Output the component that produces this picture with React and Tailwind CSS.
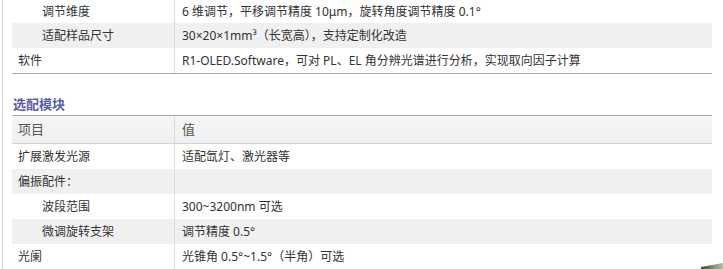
import React from "react";

const font = { fontFamily: '"Noto Sans", "Noto Sans CJK SC", sans-serif' };

function Row({ label, value, gray, indent, h = "h-[25px]" }) {
  return (
    <div className={`flex ${h} ${gray ? "bg-[#f0f0f0]" : "bg-white"}`}>
      <div className={`w-[163px] shrink-0 border-r border-[#dcdcdc] flex items-center ${indent ? "pl-[30px]" : "pl-[6px]"}`}>
        {label}
      </div>
      <div className="flex-1 flex items-center pl-[7px]">{value}</div>
    </div>
  );
}

export default function App() {
  return (
    <div className="relative w-[723px] h-[269px] overflow-hidden bg-white text-[12px] text-[#333] leading-none" style={font}>
      <div className="flex h-full">
        <div className="w-[2px] shrink-0" />
        <div className="w-px shrink-0 bg-[#d4d4d4]" />
        <div className="w-[9px] shrink-0" />
        <div className="w-[700px] shrink-0 flex flex-col">
          <div className="border-b border-[#a9a9a9]">
            <Row indent h="h-[23px]" label="调节维度" value="6 维调节，平移调节精度 10μm，旋转角度调节精度 0.1°" />
            <Row indent gray label="适配样品尺寸" value="30×20×1mm³（长宽高），支持定制化改造" />
            <Row label="软件" value="R1-OLED.Software，可对 PL、EL 角分辨光谱进行分析，实现取向因子计算" />
          </div>
          <div className="h-[41px] flex items-end pb-[4px] pl-[1px]">
            <span className="text-[13px] font-bold text-[#5a5ca8]">选配模块</span>
          </div>
          <div className="flex h-[29px] border-t border-[#a9a9a9] border-b border-b-[#cfd3da] bg-gradient-to-b from-[#f6f6f6] to-[#eeeff0] text-[#555] text-[13px]">
            <div className="w-[163px] shrink-0 border-r border-[#dcdcdc] flex items-center pl-[6px]">项目</div>
            <div className="flex-1 flex items-center pl-[7px]">值</div>
          </div>
          <Row label="扩展激发光源" value="适配氙灯、激光器等" />
          <Row gray label="偏振配件：" value="" />
          <Row indent label="波段范围" value="300~3200nm 可选" />
          <Row indent gray label="微调旋转支架" value="调节精度 0.5°" />
          <Row label="光阑" value="光锥角 0.5°~1.5°（半角）可选" />
        </div>
      </div>
      <svg className="absolute right-0 bottom-0" width="22" height="6" viewBox="0 0 22 6">
        <defs>
          <linearGradient id="g" x1="0" y1="0" x2="1" y2="0">
            <stop offset="0" stopColor="#3a4a30" />
            <stop offset="1" stopColor="#b8c0a8" />
          </linearGradient>
        </defs>
        <polygon points="0,4 22,0 22,6 0,6" fill="url(#g)" />
      </svg>
    </div>
  );
}
